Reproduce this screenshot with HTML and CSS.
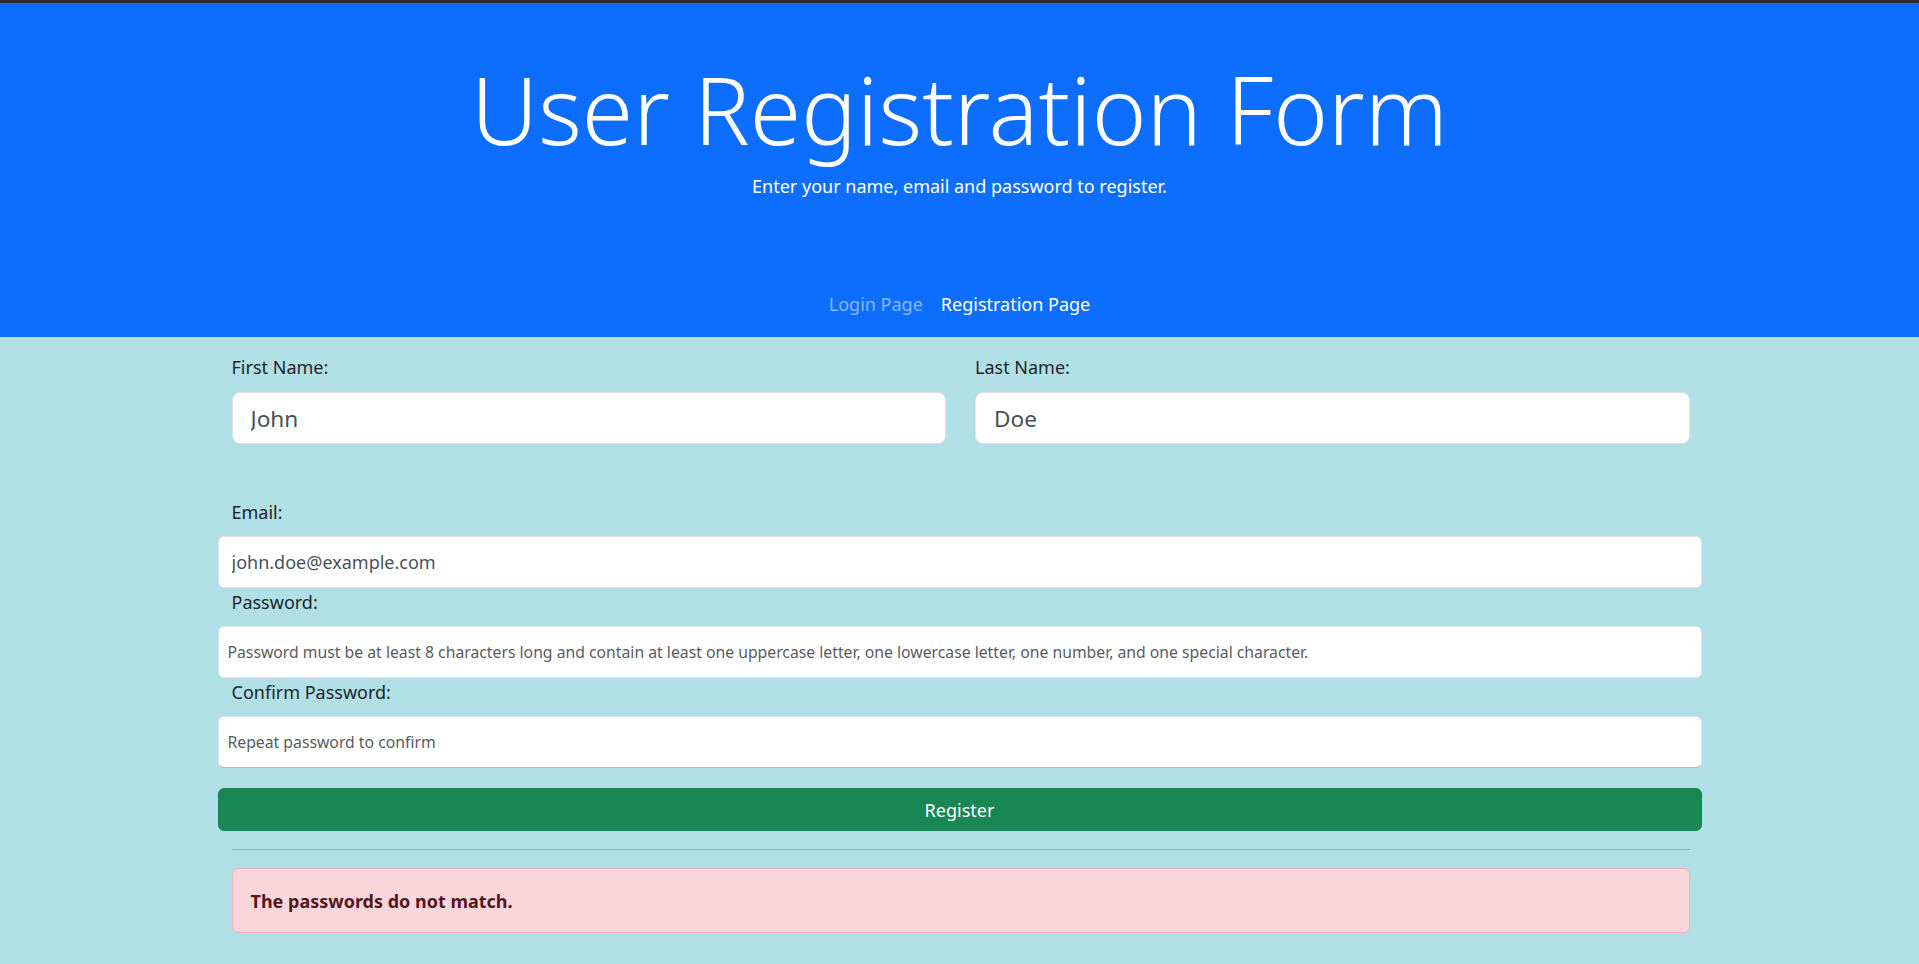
FILE: index.html
```html
<!DOCTYPE html>
<html lang="en">
<head>
<meta charset="utf-8">
<title>User Registration Form</title>
<link rel="stylesheet" href="styles.css">
</head>
<body>
<header class="hero">
  <h1 class="hero-title">User Registration Form</h1>
  <p class="hero-sub">Enter your name, email and password to register.</p>
  <nav class="hero-nav">
    <a class="nav-link" href="#">Login Page</a>
    <a class="nav-link active" href="#">Registration Page</a>
  </nav>
</header>
<main class="form-wrap">
  <div class="name-row">
    <div class="field">
      <label class="lbl" for="fn">First Name:</label>
      <input class="inp inp-lg" id="fn" type="text" value="John">
    </div>
    <div class="field">
      <label class="lbl" for="ln">Last Name:</label>
      <input class="inp inp-lg" id="ln" type="text" value="Doe">
    </div>
  </div>
  <label class="lbl lbl-email inset" for="em">Email:</label>
  <input class="inp inp-md" id="em" type="email" value="john.doe@example.com">
  <label class="lbl lbl-next inset" for="pw">Password:</label>
  <input class="inp inp-sm" id="pw" type="password" placeholder="Password must be at least 8 characters long and contain at least one uppercase letter, one lowercase letter, one number, and one special character.">
  <label class="lbl lbl-next inset" for="cpw">Confirm Password:</label>
  <input class="inp inp-sm inp-last" id="cpw" type="password" placeholder="Repeat password to confirm">
  <button class="btn-register" type="button">Register</button>
  <hr class="divider inset">
  <div class="alert inset">The passwords do not match.</div>
</main>
</body>
</html>
```
FILE: styles.css
```css
* { box-sizing: border-box; }
html, body { margin: 0; padding: 0; }
body {
  background: #b0e0e6;
  font-family: "Noto Sans", "Open Sans", sans-serif;
  color: #212529;
  min-height: 964px;
}
.hero {
  background: #0d6efd;
  border-top: 3px solid #2c2c2c;
  height: 337px;
  padding-top: 54px;
  display: flex;
  flex-direction: column;
  align-items: center;
  color: #fff;
}
.hero-title {
  margin: 0;
  font-size: 93px;
  font-weight: 300;
  line-height: 105.6px;
}
.hero-sub {
  margin: 10px 0 0;
  font-size: 18px;
  line-height: 27px;
}
.hero-nav {
  margin-top: 91px;
  display: flex;
  gap: 18px;
}
.nav-link {
  font-size: 18px;
  line-height: 27px;
  color: rgba(255,255,255,0.5);
  text-decoration: none;
}
.nav-link.active { color: #fff; }

.form-wrap {
  width: 1484px;
  margin: 0 auto;
  padding-top: 17px;
  display: flex;
  flex-direction: column;
}
.inset { margin-left: 14px; margin-right: 12px; }
.name-row {
  margin: 0 12px 0 14px;
  display: grid;
  grid-template-columns: 1fr 1fr;
  gap: 29px;
}
.field { display: flex; flex-direction: column; }
.lbl {
  display: block;
  font-size: 18px;
  line-height: 27px;
  color: #212529;
}
.lbl-email { margin-top: 55px; }
.lbl-next { margin-top: 1px; }
.inp {
  display: block;
  width: 100%;
  height: 52px;
  margin-top: 10px;
  background: #fff;
  border: 1px solid #dee2e6;
  border-radius: 6px;
  color: #495057;
  font-family: inherit;
  outline: none;
}
.inp::placeholder { color: #595c5f; opacity: 1; }
.inp-lg {
  margin-top: 11px;
  padding: 0 18px;
  font-size: 22.6px;
  border-radius: 8px;
}
.inp-md {
  padding: 0 13px;
  font-size: 18px;
}
.inp-sm {
  padding: 0 9px;
  font-size: 15.75px;
}
.inp-last { border-bottom-color: #a9bfc2; }
.btn-register {
  margin-top: 20px;
  height: 43px;
  width: 100%;
  background: #198754;
  border: 1px solid #198754;
  border-radius: 6px;
  color: #fff;
  font-family: inherit;
  font-size: 18px;
}
.divider {
  margin-top: 18px;
  margin-bottom: 0;
  border: 0;
  border-top: 1px solid #8fb4b8;
  height: 0;
}
.alert {
  margin-top: 18px;
  height: 65px;
  padding: 0 18px;
  display: flex;
  align-items: center;
  background: #f8d7da;
  border: 1px solid #f1aeb5;
  border-radius: 6px;
  color: #58151c;
  font-weight: 700;
  font-size: 18px;
}
```
